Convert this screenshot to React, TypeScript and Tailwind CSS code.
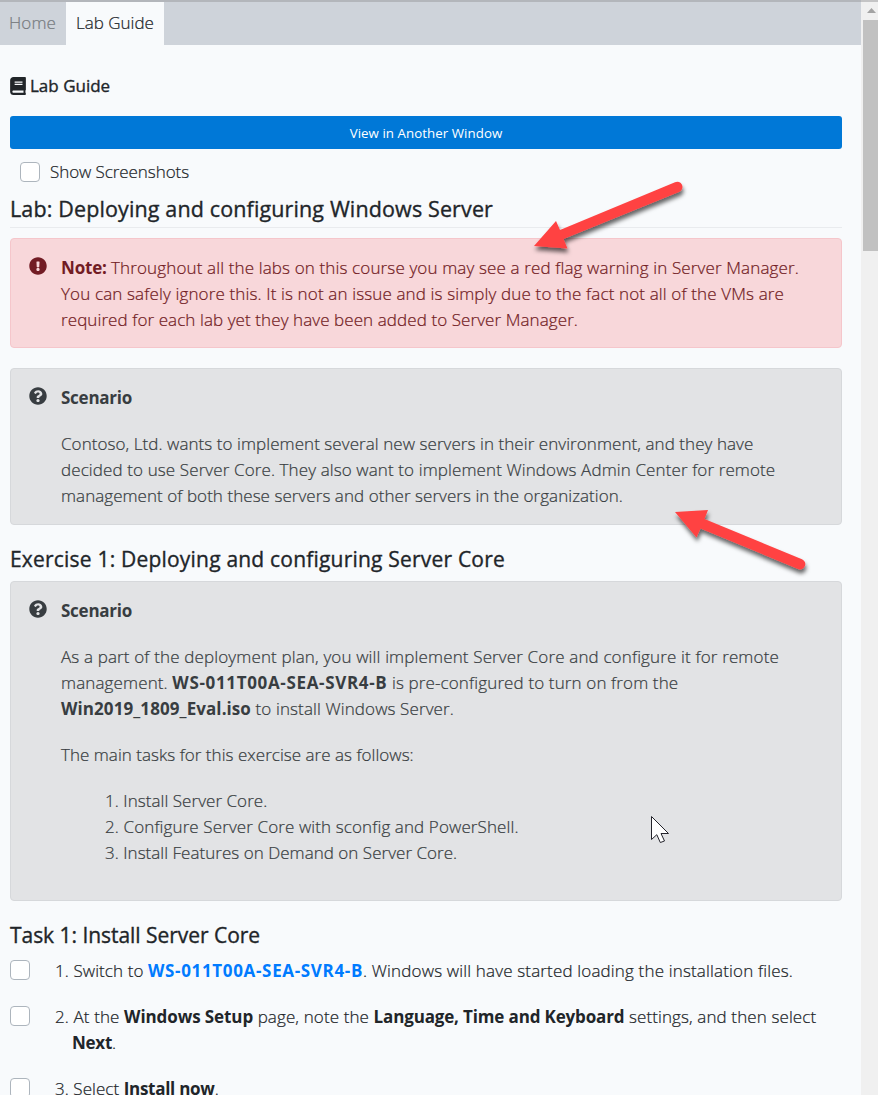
import type { ReactNode } from 'react';
import { FaBook, FaExclamationCircle, FaQuestionCircle } from 'react-icons/fa';

function Scenario({ className, children }: { className: string; children: ReactNode }) {
  return (
    <section className={`flex w-[832px] rounded border border-[#d6d8db] bg-[#e2e3e5] text-[#383d41] ${className}`}>
      <FaQuestionCircle className="mt-[18px] ml-[18px] size-[18px] shrink-0" />
      <div className="mt-[16px] ml-[14px]">
        <p className="mb-5 font-bold tracking-[-0.25px] [-webkit-text-stroke:0]">Scenario</p>
        {children}
      </div>
    </section>
  );
}

function Box({ className = '' }: { className?: string }) {
  return <span className={`block size-5 shrink-0 rounded border border-[#adb5bd] bg-white ${className}`} />;
}

function Step({ className = '', children }: { className?: string; children: ReactNode }) {
  return (
    <div className={`flex ${className}`}>
      <Box className="mt-[3px] mr-[25px]" />
      <div className="pt-px">{children}</div>
    </div>
  );
}

export default function App() {
  return (
    <div className="relative flex h-[1095px] w-[878px] overflow-hidden bg-[#f8fafc] font-['Open_Sans',sans-serif] text-[17px] leading-[26px] font-light whitespace-nowrap text-[#212529] [-webkit-text-stroke:0.22px]">
      <main className="w-[861px] shrink-0">
        <nav className="flex h-[45px] border-t-2 border-[#b3b6bb] bg-[#ced3da]">
          <div className="w-[66px] pt-[8px] pl-[9px] tracking-[0.1px] text-[#777b80]">Home</div>
          <div className="w-[98px] bg-[#f8fafc] pt-[8px] pl-[10px]">Lab Guide</div>
        </nav>
        <div className="pt-[28px] pl-[10px]">
          <h1 className="flex h-[26px] items-center font-normal [-webkit-text-stroke:0.35px]">
            <FaBook className="mr-[4px] h-[18px] w-[16px]" />
            Lab Guide
          </h1>
          <button className="mt-[17px] block h-[33px] w-[832px] rounded-[3px] bg-[#0078d7] pt-px text-center text-[13.3px] leading-[32px] font-normal tracking-[0.05px] text-white [-webkit-text-stroke:0]">
            View in Another Window
          </button>
          <label className="mt-[10px] flex items-center pl-[10px] tracking-[-0.075px]">
            <Box className="mr-[10px]" />
            Show Screenshots
          </label>
          <h2 className="mt-2 h-[35px] w-[832px] border-b border-[#e9ebee] pt-[3px] text-[21.5px] font-normal tracking-[0.13px] [-webkit-text-stroke:0.35px]">
            Lab: Deploying and configuring Windows Server
          </h2>
          <section className="mt-[10px] flex h-[110px] w-[832px] rounded border border-[#f5c6cb] bg-[#f8d7da] text-[#721c24]">
            <FaExclamationCircle className="mt-[18px] ml-[18px] size-[18px] shrink-0" />
            <div className="mt-4 ml-[14px]">
              <b className="font-bold tracking-[-0.17px] [-webkit-text-stroke:0]">Note: </b>
              <span className="tracking-[0.135px]">Throughout all the labs on this course you may see a red flag warning in Server Manager.</span>
              <p className="tracking-[0.138px]">You can safely ignore this. It is not an issue and is simply due to the fact not all of the VMs are</p>
              <p className="tracking-[0.087px]">required for each lab yet they have been added to Server Manager.</p>
            </div>
          </section>
          <Scenario className="mt-5 h-[157px]">
            <p className="tracking-[0.065px]">Contoso, Ltd. wants to implement several new servers in their environment, and they have</p>
            <p className="tracking-[0.11px]">decided to use Server Core. They also want to implement Windows Admin Center for remote</p>
            <p className="tracking-[0.052px]">management of both these servers and other servers in the organization.</p>
          </Scenario>
          <h2 className="mt-[21px] h-[35px] text-[21px] font-normal tracking-[0.2px] [-webkit-text-stroke:0.35px]">
            Exercise 1: Deploying and configuring Server Core
          </h2>
          <Scenario className="h-[320px]">
            <p className="tracking-[0.143px]">As a part of the deployment plan, you will implement Server Core and configure it for remote</p>
            <p className="tracking-[0.13px]">
              management. <b className="font-bold tracking-[0.657px] [-webkit-text-stroke:0]">WS-011T00A-SEA-SVR4-B</b> is pre-configured to turn on from the
            </p>
            <p className="tracking-[0.115px]">
              <b className="font-bold tracking-[0.085px] [-webkit-text-stroke:0]">Win2019_1809_Eval.iso</b> to install Windows Server.
            </p>
            <p className="my-5 tracking-[0.03px]">The main tasks for this exercise are as follows:</p>
            <div className="pl-[44px]">
              <p className="tracking-[0.05px]">1. Install Server Core.</p>
              <p className="tracking-[0.11px]">2. Configure Server Core with sconfig and PowerShell.</p>
              <p className="tracking-[0.03px]">3. Install Features on Demand on Server Core.</p>
            </div>
          </Scenario>
          <h2 className="mt-[21px] h-[35px] text-[21px] font-normal tracking-[-0.04px] [-webkit-text-stroke:0.35px]">
            Task 1: Install Server Core
          </h2>
          <Step className="h-[46px]">
            <p className="tracking-[0.158px]">
              <span className="tracking-[0.085px]">1. Switch to </span>
              <b className="font-bold tracking-[0.657px] text-[#007bff] [-webkit-text-stroke:0]">WS-011T00A-SEA-SVR4-B</b>. Windows will have started loading the installation files.
            </p>
          </Step>
          <Step className="h-[72px]">
            <p className="tracking-[0.11px]">
              2. At the <b className="font-bold tracking-[-0.09px] [-webkit-text-stroke:0]">Windows Setup</b> page, note the{' '}
              <b className="font-bold tracking-[-0.15px] [-webkit-text-stroke:0]">Language, Time and Keyboard</b> settings, and then select
            </p>
            <p className="pl-[17px]"><b className="font-bold tracking-[-0.27px] [-webkit-text-stroke:0]">Next</b>.</p>
          </Step>
          <Step>
            <p className="tracking-[0.05px]">
              3. Select <b className="font-bold tracking-[-0.27px] [-webkit-text-stroke:0]">Install now</b>.
            </p>
          </Step>
        </div>
      </main>
      <aside className="flex w-[17px] shrink-0 flex-col items-end border-t-2 border-[#c4c4c5] bg-[#f0f0f0]">
        <svg className="mt-[6px] mr-[2px] h-[5px] w-[9px]" viewBox="0 0 9 5"><path d="M4.5 0L9 5H0Z" fill="#a3a3a3" /></svg>
        <div className="mt-[7px] h-[231px] w-[15px] bg-[#c1c1c1]" />
      </aside>
      <svg className="pointer-events-none absolute inset-0 h-[1095px] w-[878px]" viewBox="0 0 878 1095">
        <defs>
          <filter id="shadow" x="-20%" y="-20%" width="140%" height="160%">
            <feDropShadow dx="1" dy="4" stdDeviation="2" floodColor="#000" floodOpacity="0.6" />
          </filter>
        </defs>
        <g fill="#ff4343" filter="url(#shadow)">
          <path d="M534 246L556 221L560 230L675 182.300A5.200 5.200 0 0 1 679.500 191.800L563.500 239L567.500 248.500Z" />
          <path d="M675 512L708 510L704.500 519L802 559.200A5.200 5.200 0 0 1 798 569L700.500 528.500L696.500 537.500Z" />
        </g>
        <path d="M651.500 816.500V839.500L656.800 834.700L660.300 842.500L664.500 841L661 833.500H668.500Z" fill="#fff" stroke="#24242c" strokeWidth="1" />
      </svg>
    </div>
  );
}
